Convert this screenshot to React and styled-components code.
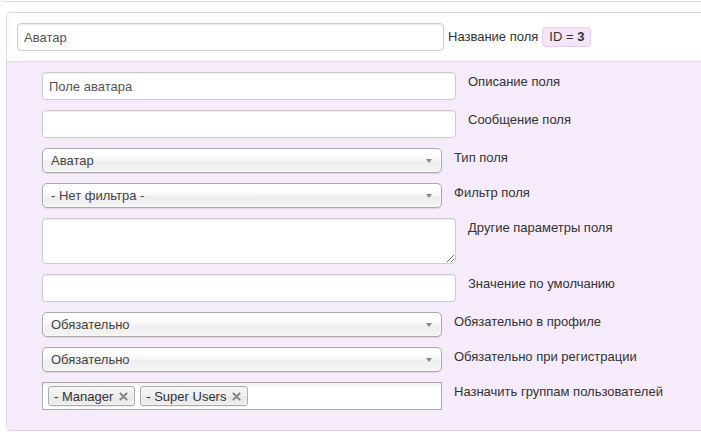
import React from "react";
import styled, { createGlobalStyle } from "styled-components";

const GlobalStyle = createGlobalStyle`
  html, body {
    margin: 0;
    padding: 0;
    background: #fff;
    overflow: hidden;
  }
  body {
    font-family: "Liberation Sans", Arial, sans-serif;
    font-size: 13px;
    line-height: 18px;
    color: #333;
  }
`;

const Page = styled.div`
  width: 716px;
`;

const PrevCard = styled.div`
  height: 1px;
  margin-left: 1px;
  border: 1px solid #e3d5ea;
  border-top: none;
  border-radius: 0 0 0 4px;
`;

const Card = styled.div`
  margin: 10px 0 0 6px;
  border: 1px solid #e3d5ea;
  border-radius: 4px;
  overflow: hidden;
`;

const Header = styled.div`
  display: flex;
  align-items: center;
  gap: 4px;
  padding: 10px;
  background: #fff;
  border-bottom: 1px solid #e6d8ed;
`;

const Body = styled.div`
  display: flex;
  flex-direction: column;
  gap: 10px;
  padding: 10px 0 20px 35px;
  background: #f6ebfa;
`;

const Row = styled.div`
  display: flex;
  align-items: flex-start;
  gap: 12px;
`;

const TextInput = styled.input`
  box-sizing: border-box;
  width: ${(p) => p.$w || 414}px;
  height: 28px;
  margin: 0;
  padding: 4px 6px;
  border: 1px solid #ccc;
  border-radius: 4px;
  background: #fff;
  box-shadow: inset 0 1px 1px rgba(0, 0, 0, 0.075);
  font-family: inherit;
  font-size: 13px;
  color: #555;
  outline: none;
`;

const TextArea = styled.textarea`
  box-sizing: border-box;
  display: block;
  width: 414px;
  height: 46px;
  margin: 0;
  padding: 4px 6px;
  border: 1px solid #ccc;
  border-radius: 4px;
  background: #fff;
  box-shadow: inset 0 1px 1px rgba(0, 0, 0, 0.075);
  font-family: inherit;
  font-size: 13px;
  color: #555;
  outline: none;
`;

const Label = styled.div`
  padding-top: ${(p) => (p.$inline ? 0 : 1)}px;
  white-space: nowrap;
  color: #333;
`;

const Badge = styled.span`
  box-sizing: border-box;
  display: inline-flex;
  align-items: center;
  height: 20px;
  padding: 0 6px;
  background: #f4e5f9;
  border: 1px solid #e4d0ec;
  border-radius: 4px;
  color: #333;

  b {
    font-weight: bold;
  }
`;

const ChosenSingle = styled.div`
  box-sizing: border-box;
  display: flex;
  align-items: center;
  justify-content: space-between;
  width: 400px;
  height: 25px;
  padding: 0 8px;
  border: 1px solid #aaa;
  border-radius: 5px;
  background: linear-gradient(#fff 20%, #f6f6f6 50%, #eee 52%, #f4f4f4 100%);
  box-shadow: inset 0 0 3px #fff, 0 1px 1px rgba(0, 0, 0, 0.1);
  color: #444;
  line-height: 24px;
`;

const Arrow = styled.span`
  width: 0;
  height: 0;
  margin-right: 1px;
  border-left: 3.5px solid transparent;
  border-right: 3.5px solid transparent;
  border-top: 4px solid #888;
`;

const ChosenMulti = styled.div`
  box-sizing: border-box;
  display: flex;
  align-items: center;
  gap: 5px;
  width: 400px;
  height: 28px;
  padding: 0 5px;
  border: 1px solid #aaa;
  background-color: #fff;
  background-image: linear-gradient(#eee 1%, #fff 15%);
`;

const Choice = styled.span`
  box-sizing: border-box;
  display: inline-flex;
  align-items: center;
  gap: 6px;
  height: 20px;
  padding: 0 6px 0 5px;
  border: 1px solid #aaa;
  border-radius: 3px;
  background-image: linear-gradient(#f4f4f4 20%, #f0f0f0 50%, #e8e8e8 52%, #eee 100%);
  box-shadow: inset 0 0 2px #fff, 0 1px 0 rgba(0, 0, 0, 0.05);
  color: #333;
  line-height: 13px;
`;

const CloseIcon = () => (
  <svg width="9" height="9" viewBox="0 0 9 9">
    <path d="M1.5 1.5 L7.5 7.5 M7.5 1.5 L1.5 7.5" stroke="#8a8a8a" strokeWidth="2.2" strokeLinecap="round" />
  </svg>
);

function Select({ value }) {
  return (
    <ChosenSingle>
      <span>{value}</span>
      <Arrow />
    </ChosenSingle>
  );
}

export default function App() {
  return (
    <Page>
      <GlobalStyle />
      <PrevCard />
      <Card>
        <Header>
          <TextInput $w={427} defaultValue="Аватар" />
          <Label $inline>Название поля</Label>
          <Badge>
            ID =&nbsp;<b>3</b>
          </Badge>
        </Header>
        <Body>
          <Row>
            <TextInput defaultValue="Поле аватара" />
            <Label>Описание поля</Label>
          </Row>
          <Row>
            <TextInput defaultValue="" />
            <Label>Сообщение поля</Label>
          </Row>
          <Row>
            <Select value="Аватар" />
            <Label>Тип поля</Label>
          </Row>
          <Row>
            <Select value="- Нет фильтра -" />
            <Label>Фильтр поля</Label>
          </Row>
          <Row>
            <TextArea defaultValue="" />
            <Label>Другие параметры поля</Label>
          </Row>
          <Row>
            <TextInput defaultValue="" />
            <Label>Значение по умолчанию</Label>
          </Row>
          <Row>
            <Select value="Обязательно" />
            <Label>Обязательно в профиле</Label>
          </Row>
          <Row>
            <Select value="Обязательно" />
            <Label>Обязательно при регистрации</Label>
          </Row>
          <Row>
            <ChosenMulti>
              <Choice>
                - Manager <CloseIcon />
              </Choice>
              <Choice>
                - Super Users <CloseIcon />
              </Choice>
            </ChosenMulti>
            <Label>Назначить группам пользователей</Label>
          </Row>
        </Body>
      </Card>
    </Page>
  );
}
